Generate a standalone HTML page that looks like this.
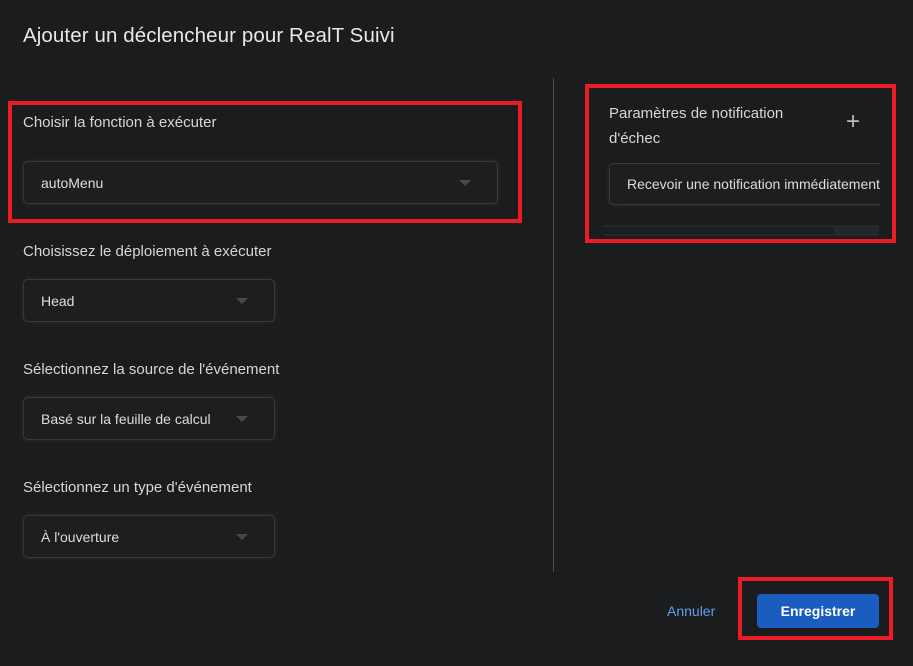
<!DOCTYPE html>
<html><head><style>
body{margin:0;width:913px;height:666px;background:#1b1c1e;font-family:"Liberation Sans",sans-serif;color:#e3e3e3;position:relative;overflow:hidden}
.a{position:absolute}
.t{font-size:20.5px;left:23px;top:24px;color:#e8e8e8;letter-spacing:0.1px}
.l{font-size:15px;color:#d6d6d6;left:23px}
.s{background:#1d1e20;border:1px solid #38393b;border-radius:5px;box-shadow:0 0 6px rgba(255,255,255,.08);font-size:14px;color:#ddd;box-sizing:border-box;padding-left:17px;display:flex;align-items:center}
.s i{position:absolute;right:26px;top:50%;margin-top:-3px;border-left:6px solid transparent;border-right:6px solid transparent;border-top:6px solid #4a4a45;}
.r{border:4px solid #ec1c24;box-sizing:border-box}
</style></head><body>
<div class="a t">Ajouter un déclencheur pour RealT Suivi</div>
<div class="a r" style="left:8px;top:101px;width:514px;height:122px"></div>
<div class="a l" style="top:114px">Choisir la fonction à exécuter</div>
<div class="a s" style="left:23px;top:161px;width:475px;height:43px">autoMenu<i></i></div>
<div class="a l" style="top:243px">Choisissez le déploiement à exécuter</div>
<div class="a s" style="left:23px;top:279px;width:252px;height:43px">Head<i></i></div>
<div class="a l" style="top:361px">Sélectionnez la source de l'événement</div>
<div class="a s" style="left:23px;top:397px;width:252px;height:43px">Basé sur la feuille de calcul<i></i></div>
<div class="a l" style="top:479px">Sélectionnez un type d'événement</div>
<div class="a s" style="left:23px;top:515px;width:252px;height:43px">À l'ouverture<i></i></div>
<div class="a" style="left:553px;top:78px;width:1px;height:494px;background:#4a4b4d"></div>
<div class="a r" style="left:585px;top:84px;width:311px;height:159px"></div>
<div class="a l" style="left:609px;top:101px;line-height:25px;font-size:15px">Paramètres de notification<br>d'échec</div>
<div class="a" style="left:846px;top:108px;font-size:24px;color:#bbb">+</div>
<div class="a" style="left:603px;top:163px;width:277px;height:62px;overflow:hidden">
<div class="a s" style="left:6px;top:0;width:290px;height:42px">Recevoir une notification immédiatement</div></div>
<div class="a" style="left:604px;top:225px;width:275px;height:11px;background:#25272a"></div>
<div class="a" style="left:604px;top:227px;width:230px;height:7px;background:#1c1d1f"></div>
<div class="a" style="left:667px;top:603px;font-size:14px;color:#5c9ef0">Annuler</div>
<div class="a r" style="left:738px;top:577px;width:155px;height:63px"></div>
<div class="a" style="left:757px;top:594px;width:122px;height:34px;background:#1b5cc0;border-radius:4px;color:#fff;font-size:14px;font-weight:bold;text-align:center;line-height:34px">Enregistrer</div>
</body></html>
